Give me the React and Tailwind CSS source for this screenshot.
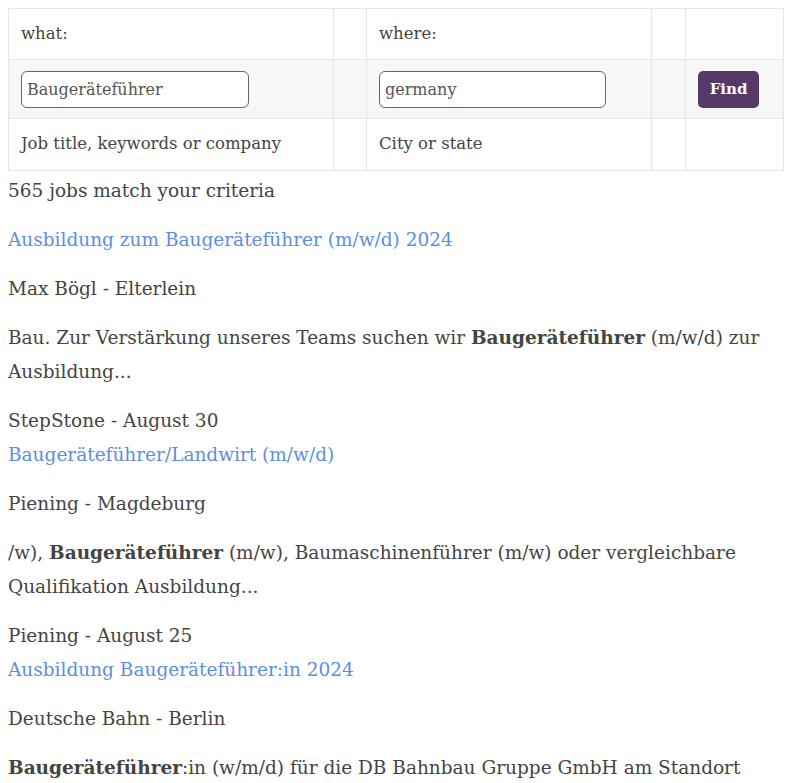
export default function App() {
  const cell = "border border-[#e6e6e6] px-3 align-middle";
  return (
    <div className="min-h-screen bg-white px-2 pt-2 text-[#444] [font-family:'DejaVu_Serif',serif]">
      {/* Search form */}
      <table className="w-[775px] border-collapse text-[16.5px] table-fixed">
        <colgroup>
          <col className="w-[325px]" />
          <col className="w-[33px]" />
          <col className="w-[285px]" />
          <col className="w-[34px]" />
          <col className="w-[98px]" />
        </colgroup>
        <tbody>
          <tr className="h-[51px]">
            <td className={cell}>what:</td>
            <td className={cell}></td>
            <td className={cell}>where:</td>
            <td className={cell}></td>
            <td className={cell}></td>
          </tr>
          <tr className="h-[59px] bg-[#f7f7f7]">
            <td className={cell}>
              <input
                defaultValue="Baugeräteführer"
                className="w-[228px] h-[37px] rounded-md border border-[#666] bg-white px-[5px] text-[16px] text-[#555] outline-none"
              />
            </td>
            <td className={cell}></td>
            <td className={cell}>
              <input
                defaultValue="germany"
                className="w-[227px] h-[37px] rounded-md border border-[#666] bg-white px-[5px] text-[16px] text-[#555] outline-none"
              />
            </td>
            <td className={cell}></td>
            <td className={cell}>
              <button className="h-[37px] w-[61px] rounded-[5px] bg-[#553a68] text-[15px] font-bold text-white">
                Find
              </button>
            </td>
          </tr>
          <tr className="h-[52px]">
            <td className={cell}>Job title, keywords or company</td>
            <td className={cell}></td>
            <td className={cell}>City or state</td>
            <td className={cell}></td>
            <td className={cell}></td>
          </tr>
        </tbody>
      </table>

      {/* Results */}
      <div className="text-[18.5px] leading-[34px]">
        <p className="mb-[15px] mt-[3px]">565 jobs match your criteria</p>

        <p className="mb-[15px]"><a href="#" className="text-[#5b8ee6]">Ausbildung zum Baugeräteführer (m/w/d) 2024</a></p>
        <p className="mb-[15px]">Max Bögl - Elterlein</p>
        <p className="mb-[15px]">Bau. Zur Verstärkung unseres Teams suchen wir <b>Baugeräteführer</b> (m/w/d) zur Ausbildung...</p>
        <p>StepStone - August 30</p>

        <p className="mb-[15px]"><a href="#" className="text-[#5b8ee6]">Baugeräteführer/Landwirt (m/w/d)</a></p>
        <p className="mb-[15px]">Piening - Magdeburg</p>
        <p className="mb-[15px]">/w), <b>Baugeräteführer</b> (m/w), Baumaschinenführer (m/w) oder vergleichbare Qualifikation Ausbildung...</p>
        <p>Piening - August 25</p>

        <p className="mb-[15px]"><a href="#" className="text-[#5b8ee6]">Ausbildung Baugeräteführer:in 2024</a></p>
        <p className="mb-[15px]">Deutsche Bahn - Berlin</p>
        <p className="mb-[15px]"><b>Baugeräteführer</b>:in (w/m/d) für die DB Bahnbau Gruppe GmbH am Standort Berlin...</p>
      </div>
    </div>
  );
}
